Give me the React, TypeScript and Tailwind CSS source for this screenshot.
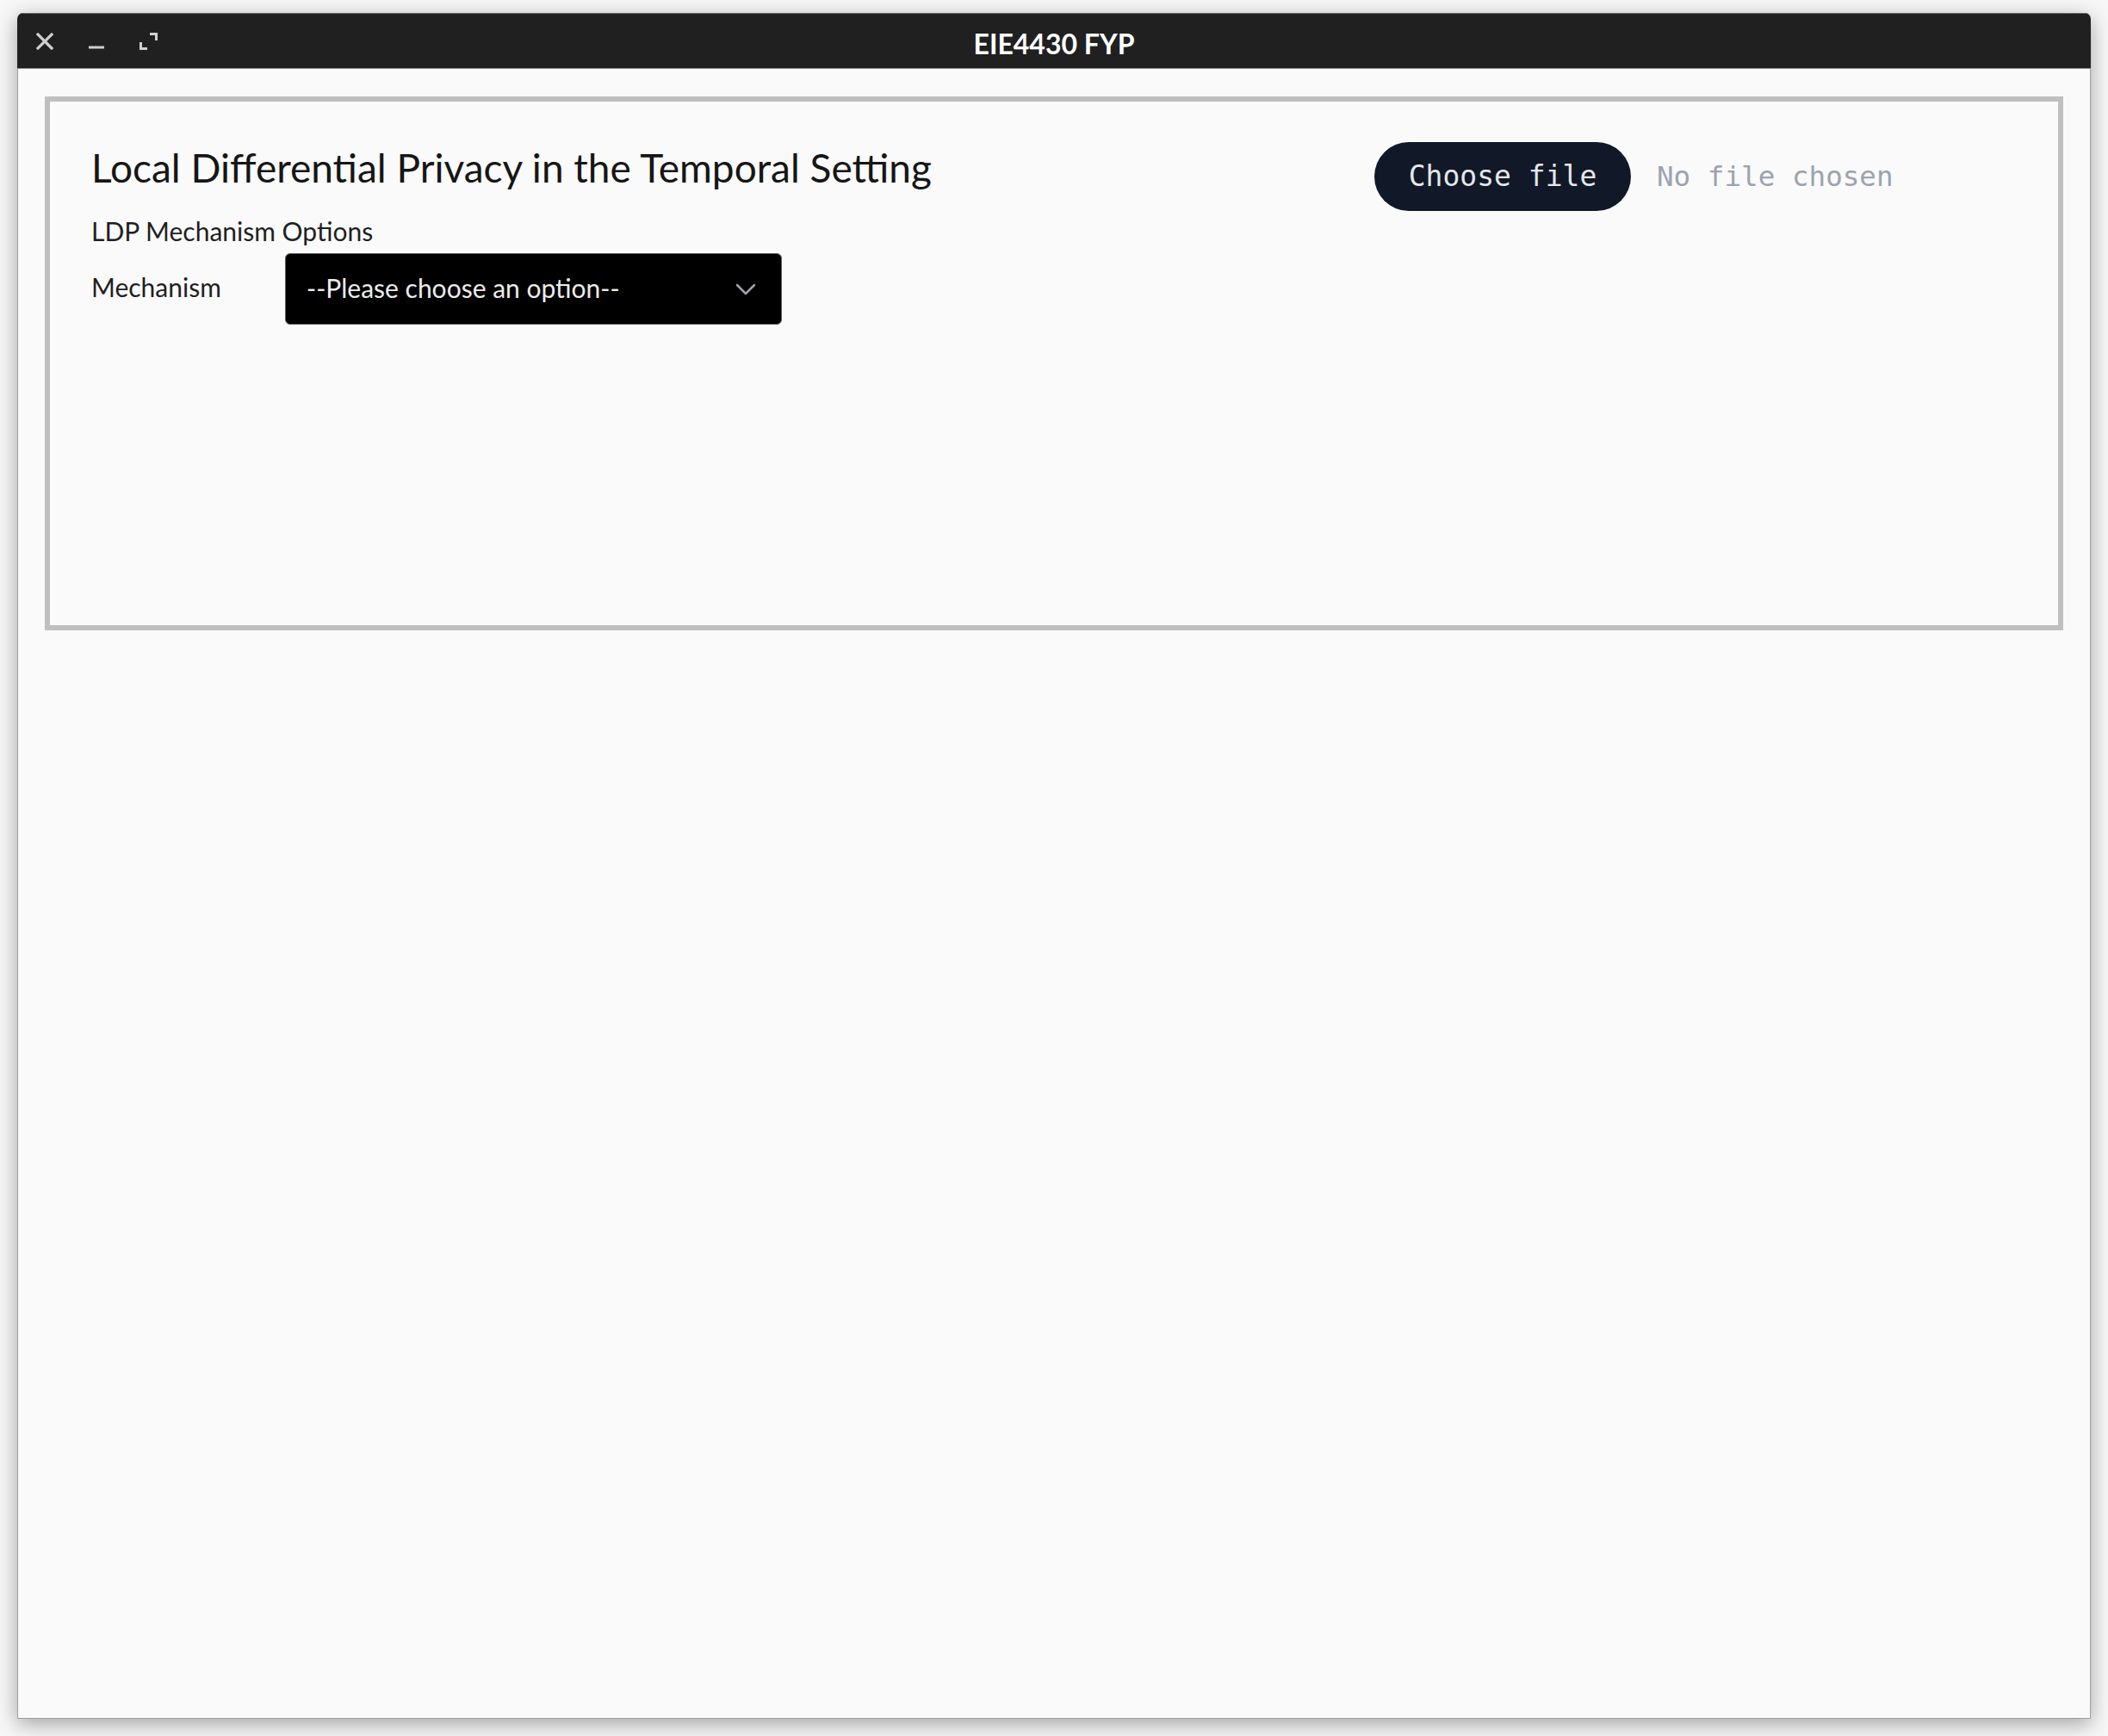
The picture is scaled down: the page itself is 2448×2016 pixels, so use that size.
import React from "react";

const sans = { fontFamily: "Lato, 'Noto Sans', sans-serif" };
const mono = { fontFamily: "'DejaVu Sans Mono', 'Liberation Mono', monospace" };

// window controls on the left of the title bar
const TitleBar: React.FC = () => {
  return (
    <div className="relative h-[65px] shrink-0 flex items-center bg-[#202020] border-t border-[#6a6a6a] border-b border-b-[#8a8a8a]">
      <div className="flex items-center pl-[22px] gap-[40px]">
        <svg width="20" height="20" viewBox="0 0 20 20" className="text-[#cfcfcf]">
          <path d="M2 2 L18 18 M18 2 L2 18" stroke="currentColor" strokeWidth="3.2" strokeLinecap="square" fill="none" />
        </svg>
        <svg width="20" height="20" viewBox="0 0 20 20" className="text-[#cfcfcf]">
          <path d="M1 17 H19" stroke="currentColor" strokeWidth="3" fill="none" />
        </svg>
        <svg width="21" height="20" viewBox="0 0 21 20" className="text-[#cfcfcf]">
          <path d="M12 1.5 H19.5 V9" stroke="currentColor" strokeWidth="3" fill="none" />
          <path d="M1.5 11 V18.5 H9" stroke="currentColor" strokeWidth="3" fill="none" />
        </svg>
      </div>
      <div
        className="absolute inset-0 pt-[6px] flex items-center justify-center text-white font-bold text-[32px] pointer-events-none"
        style={sans}
      >
        EIE4430 FYP
      </div>
    </div>
  );
};

const App: React.FC = () => {
  return (
    <div className="min-h-screen bg-[#f7f7f7] pl-[20px] pt-[15px]">
      <div className="w-[2408px] h-[1981px] flex flex-col rounded-t-[7px] overflow-hidden shadow-[0_6px_24px_rgba(0,0,0,0.35)]">
        <TitleBar />
        <main className="flex-1 bg-[#fafafa] border-x border-b border-[#9e9e9e] px-[31px] pt-8" style={sans}>
          <section className="h-[620px] border-[6px] border-[#bfbfbf] px-[48px] pt-[47px]">
            <div className="flex items-start justify-between">
              <h1 className="mt-[7px] text-[46px] leading-[46px] text-[#161616]">
                Local Differential Privacy in the Temporal Setting
              </h1>
              <div className="w-[746px] flex items-center" style={mono}>
                <button className="h-[80px] w-[298px] rounded-full bg-[#111827] text-[#e5e7eb] text-[33px]">
                  Choose file
                </button>
                <span className="ml-[30px] text-[32.6px] text-[#9ca3af]">No file chosen</span>
              </div>
            </div>

            <p className="mt-[8px] text-[30px] leading-[30px] text-[#1f1f1f]">LDP Mechanism Options</p>

            <div className="mt-[11px] flex items-center">
              <label className="w-[225px] pb-[6px] text-[30px] leading-[30px] text-[#1f1f1f]">Mechanism</label>
              <div className="relative">
                <select
                  className="appearance-none w-[577px] h-[83px] rounded-[6px] bg-black border border-[#5b5b5b] pl-[24px] pb-[3px] text-[30px] text-[#ececec] outline-none"
                  style={sans}
                  defaultValue=""
                >
                  <option value="">--Please choose an option--</option>
                </select>
                <svg
                  width="24"
                  height="14"
                  viewBox="0 0 24 14"
                  className="absolute right-[30px] top-[35px] text-[#9ca3af] pointer-events-none"
                >
                  <path d="M2 2 L12 12 L22 2" stroke="currentColor" strokeWidth="2.5" fill="none" strokeLinecap="round" strokeLinejoin="round" />
                </svg>
              </div>
            </div>
          </section>
        </main>
      </div>
    </div>
  );
};

export default App;
